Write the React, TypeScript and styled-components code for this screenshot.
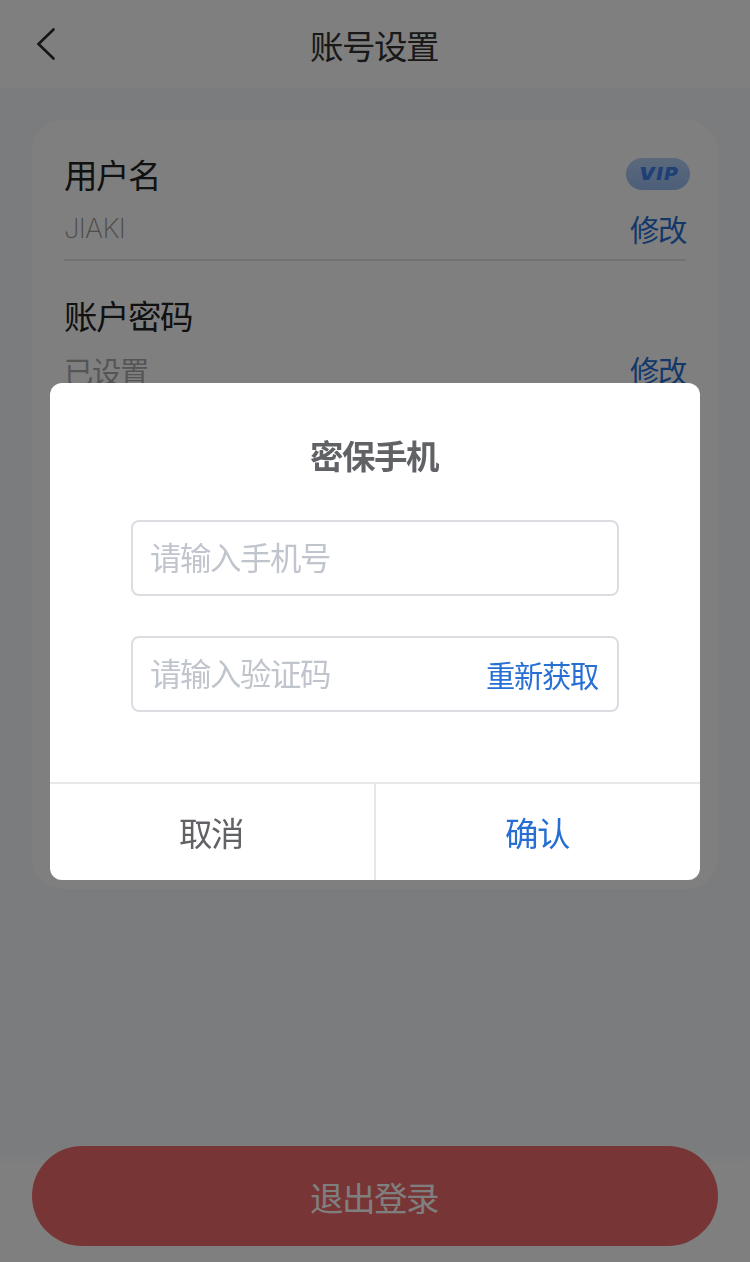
import React from "react";
import styled, { createGlobalStyle } from "styled-components";

const GlobalStyle = createGlobalStyle`
  * { box-sizing: border-box; }
  body {
    margin: 0;
    background: #f6f8fc;
    font-family: "Noto Sans CJK SC", sans-serif;
    color: #222;
  }
  button, input { font-family: inherit; padding: 0; border: 0; background: none; outline: none; }
`;

const Page = styled.div`
  height: 1262px;
  display: flex;
  flex-direction: column;
  background: #f6f8fc;
`;

const Header = styled.header`
  height: 88px;
  flex: none;
  display: grid;
  grid-template-columns: 92px 1fr 92px;
  align-items: center;
  background: #fff;
`;

const BackIcon = styled.svg`
  margin-left: 32px;
  width: 28px;
  height: 40px;
`;

const Title = styled.h1`
  margin: 0;
  padding: 1px 2px 0 0;
  text-align: center;
  font-size: 33.5px;
  letter-spacing: -1.5px;
  line-height: 48px;
  font-weight: 400;
  color: #333;
`;

const Card = styled.main`
  margin: 32px 32px 0;
  height: 769px;
  padding: 0 32px;
  border-radius: 32px;
  background: #fff;
`;

const Item = styled.section`
  height: 141px;
  padding-top: 30px;
  border-bottom: 2px solid #e4e4e4;
`;

const ItemLine = styled.div<{ $height: number }>`
  height: ${(p) => p.$height}px;
  display: flex;
  align-items: center;
  justify-content: space-between;
`;

const Label = styled.span`
  font-size: 33.5px;
  letter-spacing: -1.5px;
  line-height: 48px;
  font-weight: 400;
  color: #222;
`;

const Value = styled.span<{ $latin?: boolean }>`
  padding-top: ${(p) => (p.$latin ? 0 : 2)}px;
  font-family: ${(p) => (p.$latin ? "Inter, sans-serif" : "inherit")};
  font-size: ${(p) => (p.$latin ? 27.5 : 29.3)}px;
  letter-spacing: ${(p) => (p.$latin ? -0.7 : -1.3)}px;
  line-height: 42px;
  font-weight: ${(p) => (p.$latin ? 200 : 400)};
  color: ${(p) => (p.$latin ? "#999" : "#aaa")};
`;

const EditLink = styled.button`
  font-size: 29.3px;
  letter-spacing: -1.3px;
  line-height: 42px;
  font-weight: 400;
  color: #286fd4;
`;

const VipBadge = styled.span`
  width: 64px;
  height: 32px;
  margin-right: -4px;
  display: flex;
  align-items: center;
  justify-content: center;
  border-radius: 16px;
  background: linear-gradient(#b8d2f8, #98bdf2);
`;

const VipText = styled.span`
  font: italic 900 17px/32px Inter, sans-serif;
  letter-spacing: 1.4px;
  transform: scaleX(1.2);
  padding-left: 1px;
  color: #3f80ec;
`;

const Footer = styled.footer`
  margin-top: auto;
  height: 116px;
  padding: 0 32px;
  background: linear-gradient(#f6f8fc 4px, #fff 20px);
`;

const LogoutButton = styled.button`
  display: block;
  width: 100%;
  height: 100px;
  padding: 2px 2px 0 0;
  border-radius: 50px;
  background: #f06a6a;
  color: #fff;
  font-size: 33.5px;
  letter-spacing: -1.5px;
  font-weight: 400;
  line-height: 98px;
`;

const Overlay = styled.div`
  position: fixed;
  inset: 0;
  display: flex;
  justify-content: center;
  align-items: flex-start;
  padding-top: 383px;
  background: rgba(0, 0, 0, 0.5);
`;

const Dialog = styled.div`
  width: 650px;
  height: 497px;
  display: flex;
  flex-direction: column;
  border-radius: 12px;
  overflow: hidden;
  background: #fff;
`;

const DialogTitle = styled.h2`
  margin: 48px 0 41px;
  padding-right: 2px;
  text-align: center;
  font-size: 33.5px;
  letter-spacing: -1.5px;
  line-height: 48px;
  font-weight: 700;
  color: #606266;
`;

const Field = styled.label`
  width: 488px;
  height: 76px;
  margin: 0 auto 40px;
  padding: 0 19px 0 18px;
  display: flex;
  align-items: center;
  border: 2px solid #dcdde2;
  border-radius: 8px;
`;

const Input = styled.input`
  flex: 1;
  min-width: 0;
  height: 72px;
  padding-bottom: 3px;
  margin-left: -1px;
  font-size: 31.4px;
  letter-spacing: -1.4px;
  font-weight: 400;
  &::placeholder { color: #c0c4cc; opacity: 1; }
`;

const ResendButton = styled.button`
  font-size: 29.3px;
  letter-spacing: -1.3px;
  line-height: 42px;
  padding-bottom: 1px;
  font-weight: 400;
  color: #286fd4;
`;

const DialogActions = styled.div`
  margin-top: auto;
  height: 98px;
  display: flex;
  border-top: 2px solid #e8e8e8;
`;

const Action = styled.button<{ $primary?: boolean }>`
  flex: 1 1 0;
  padding: 0 2px 1px 0;
  font-size: 33.5px;
  letter-spacing: -1.5px;
  font-weight: 400;
  color: ${(p) => (p.$primary ? "#286fd4" : "#606266")};
  & + & { border-left: 2px solid #e8e8e8; }
`;

export default function App() {
  return (
    <>
      <GlobalStyle />
      <Page>
        <Header>
          <BackIcon viewBox="0 0 28 40" fill="none" stroke="#2a2a2a" strokeWidth="2.6" strokeLinecap="round">
            <path d="M21.5 5.5 6.5 20l15 14.5" />
          </BackIcon>
          <Title>账号设置</Title>
        </Header>
        <Card>
          <Item>
            <ItemLine $height={48}>
              <Label>用户名</Label>
              <VipBadge>
                <VipText>VIP</VipText>
              </VipBadge>
            </ItemLine>
            <ItemLine $height={60}>
              <Value $latin>JIAKI</Value>
              <EditLink>修改</EditLink>
            </ItemLine>
          </Item>
          <Item>
            <ItemLine $height={48}>
              <Label>账户密码</Label>
            </ItemLine>
            <ItemLine $height={60}>
              <Value>已设置</Value>
              <EditLink>修改</EditLink>
            </ItemLine>
          </Item>
        </Card>
        <Footer>
          <LogoutButton>退出登录</LogoutButton>
        </Footer>
      </Page>
      <Overlay>
        <Dialog>
          <DialogTitle>密保手机</DialogTitle>
          <Field>
            <Input placeholder="请输入手机号" />
          </Field>
          <Field>
            <Input placeholder="请输入验证码" />
            <ResendButton>重新获取</ResendButton>
          </Field>
          <DialogActions>
            <Action>取消</Action>
            <Action $primary>确认</Action>
          </DialogActions>
        </Dialog>
      </Overlay>
    </>
  );
}
